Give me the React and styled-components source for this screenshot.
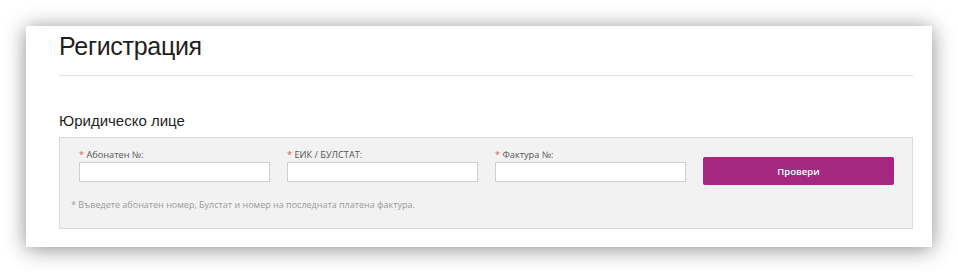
import React from 'react'
import styled, { createGlobalStyle } from 'styled-components';

const fields = [
    { id: 'subscriber', label: 'Абонатен №:' },
    { id: 'eik', label: 'ЕИК / БУЛСТАТ:' },
    { id: 'invoice', label: 'Фактура №:' },
];

function App() {
  return (
    <>
      <GlobalStyle />
      <Card>
        <Title>Регистрация</Title>
        <Divider />
        <Subtitle>Юридическо лице</Subtitle>
        <FormBox>
            <FieldRow>
                {fields.map((f) => (
                    <Field key={f.id}>
                        <Label htmlFor={f.id}><Star>*</Star> {f.label}</Label>
                        <Input id={f.id} type="text" />
                    </Field>
                ))}
                <ButtonCol>
                    <CheckButton type="button">Провери</CheckButton>
                </ButtonCol>
            </FieldRow>
            <Note>* Въведете абонатен номер, Булстат и номер на последната платена фактура.</Note>
        </FormBox>
      </Card>
    </>
  )
}

const GlobalStyle = createGlobalStyle`
    body {
        margin: 0;
        min-height: 274px;
        background: #fff;
        font-family: "Liberation Sans", Arial, sans-serif;
    }
`;

const Card = styled.div`
    box-sizing: border-box;
    margin: 26px 0 27px 26px;
    width: 906px;
    height: 221px;
    padding: 5px 19px 18px 33px;
    background: #fff;
    box-shadow: 0 2px 20px rgba(0, 0, 0, 0.45);
`;

const Title = styled.h1`
    margin: 0;
    font-size: 25px;
    line-height: 30px;
    letter-spacing: -0.3px;
    font-weight: normal;
    color: #1f1f1f;
`;

const Divider = styled.div`
    margin-top: 14px;
    height: 1px;
    background: #e3e3e3;
`;

const Subtitle = styled.h3`
    margin: 35px 0 0;
    font-size: 15px;
    line-height: 20px;
    font-weight: normal;
    color: #1f1f1f;
`;

const FormBox = styled.div`
    box-sizing: border-box;
    margin-top: 6px;
    height: 92px;
    padding: 10px 0 0 11px;
    background: #f2f2f2;
    border: 1px solid #dcdcdc;
    font-family: "Open Sans", sans-serif;
`;

const FieldRow = styled.div`
    display: flex;
    gap: 17px;
    padding-left: 8px;
`;

const Field = styled.div`
    display: flex;
    flex-direction: column;
    width: 191px;
`;

const Label = styled.label`
    font-size: 9.2px;
    line-height: 14px;
    color: #555;
`;

const Star = styled.span`
    color: #e4573d;
`;

const Input = styled.input`
    box-sizing: border-box;
    width: 191px;
    height: 20px;
    margin: 0;
    border: 1px solid #cfcfcf;
    background: #fff;
    outline: none;
`;

const ButtonCol = styled.div`
    padding-top: 9px;
`;

const CheckButton = styled.button`
    width: 191px;
    height: 28px;
    border: none;
    border-radius: 2px;
    background: #a4287f;
    color: #fff;
    font-family: "Open Sans", sans-serif;
    font-size: 9.5px;
    font-weight: 600;
    cursor: pointer;
`;

const Note = styled.p`
    margin: 13px 0 0;
    font-size: 9px;
    line-height: 13px;
    color: #9a9a9a;
`;

export default App
